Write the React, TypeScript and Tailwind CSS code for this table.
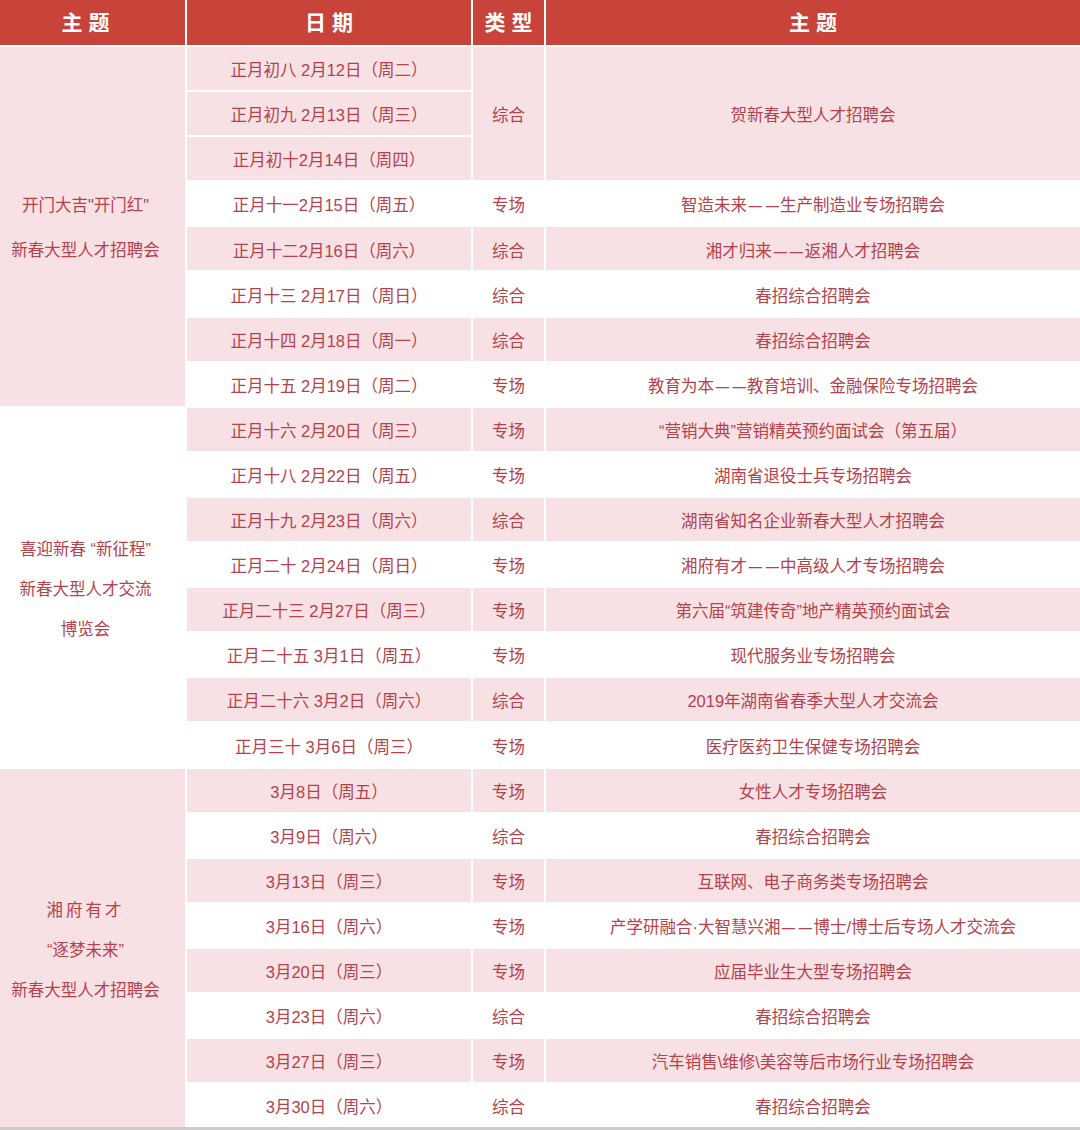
import React from "react";

type Row = { date: string; type?: string; theme?: React.ReactNode };

const D = () => (
  <span className="inline-flex">
    <span className="inline-block scale-x-[0.8]">—</span>
    <span className="inline-block scale-x-[0.8]">—</span>
  </span>
);

const rows: Row[] = [
  { date: "正月初八 2月12日（周二）" },
  { date: "正月初九 2月13日（周三）" },
  { date: "正月初十2月14日（周四）" },
  { date: "正月十一2月15日（周五）", type: "专场", theme: <>智造未来<D />生产制造业专场招聘会</> },
  { date: "正月十二2月16日（周六）", type: "综合", theme: <>湘才归来<D />返湘人才招聘会</> },
  { date: "正月十三 2月17日（周日）", type: "综合", theme: "春招综合招聘会" },
  { date: "正月十四 2月18日（周一）", type: "综合", theme: "春招综合招聘会" },
  { date: "正月十五 2月19日（周二）", type: "专场", theme: <>教育为本<D />教育培训、金融保险专场招聘会</> },
  { date: "正月十六 2月20日（周三）", type: "专场", theme: "“营销大典”营销精英预约面试会（第五届）" },
  { date: "正月十八 2月22日（周五）", type: "专场", theme: "湖南省退役士兵专场招聘会" },
  { date: "正月十九 2月23日（周六）", type: "综合", theme: "湖南省知名企业新春大型人才招聘会" },
  { date: "正月二十 2月24日（周日）", type: "专场", theme: <>湘府有才<D />中高级人才专场招聘会</> },
  { date: "正月二十三 2月27日（周三）", type: "专场", theme: "第六届“筑建传奇”地产精英预约面试会" },
  { date: "正月二十五 3月1日（周五）", type: "专场", theme: "现代服务业专场招聘会" },
  { date: "正月二十六 3月2日（周六）", type: "综合", theme: "2019年湖南省春季大型人才交流会" },
  { date: "正月三十 3月6日（周三）", type: "专场", theme: "医疗医药卫生保健专场招聘会" },
  { date: "3月8日（周五）", type: "专场", theme: "女性人才专场招聘会" },
  { date: "3月9日（周六）", type: "综合", theme: "春招综合招聘会" },
  { date: "3月13日（周三）", type: "专场", theme: "互联网、电子商务类专场招聘会" },
  { date: "3月16日（周六）", type: "专场", theme: <>产学研融合·大智慧兴湘<D />博士/博士后专场人才交流会</> },
  { date: "3月20日（周三）", type: "专场", theme: "应届毕业生大型专场招聘会" },
  { date: "3月23日（周六）", type: "综合", theme: "春招综合招聘会" },
  { date: "3月27日（周三）", type: "专场", theme: "汽车销售\\维修\\美容等后市场行业专场招聘会" },
  { date: "3月30日（周六）", type: "综合", theme: "春招综合招聘会" },
];

const font = { fontFamily: '"Liberation Sans", "Noto Sans CJK SC", sans-serif' };

function isPink(i: number) {
  return i < 3 || i % 2 === 0;
}

export default function App() {
  return (
    <div className="w-[1080px] h-[1130px] bg-white overflow-hidden" style={font}>
      <div className="grid grid-cols-[185px_284px_71px_534px] grid-rows-[45px_repeat(24,43.1px)] gap-[2px] bg-white text-[#b5424c] text-[16.5px]">
        {/* header */}
        <div className="bg-[#c8433a] text-white font-bold text-[21px] flex items-center justify-center pr-[14px]">主 题</div>
        <div className="bg-[#c8433a] text-white font-bold text-[21px] flex items-center justify-center">日 期</div>
        <div className="bg-[#c8433a] text-white font-bold text-[21px] flex items-center justify-center">类 型</div>
        <div className="bg-[#c8433a] text-white font-bold text-[21px] flex items-center justify-center">主 题</div>

        {/* left merged groups */}
        <div className="col-start-1 row-start-2 row-span-8 bg-[#f7e1e4] flex flex-col items-center justify-center leading-[45px] pr-[14px] pt-[4px]">
          <span>开门大吉"开门红"</span>
          <span>新春大型人才招聘会</span>
        </div>
        <div className="col-start-1 row-start-10 row-span-8 bg-white flex flex-col items-center justify-center leading-[40px] pr-[14px] pt-[4px]">
          <span>喜迎新春 “新征程”</span>
          <span>新春大型人才交流</span>
          <span>博览会</span>
        </div>
        <div className="col-start-1 row-start-18 row-span-8 bg-[#f7e1e4] flex flex-col items-center justify-center leading-[40px] pr-[14px] pt-[4px]">
          <span className="tracking-[3px]">湘府有才</span>
          <span>“逐梦未来”</span>
          <span>新春大型人才招聘会</span>
        </div>

        {/* merged type/theme for first three rows */}
        <div className="col-start-3 row-start-2 row-span-3 bg-[#f7e1e4] flex items-center justify-center pt-[4px]">综合</div>
        <div className="col-start-4 row-start-2 row-span-3 bg-[#f7e1e4] flex items-center justify-center pt-[4px]">贺新春大型人才招聘会</div>

        {rows.map((r, i) => {
          const bg = isPink(i) ? "bg-[#f7e1e4]" : "bg-white";
          return (
            <React.Fragment key={i}>
              <div className={`col-start-2 ${bg} flex items-center justify-center whitespace-nowrap pt-[4px]`} style={{ gridRowStart: i + 2 }}>
                {r.date}
              </div>
              {r.type && (
                <div className={`col-start-3 ${bg} flex items-center justify-center pt-[4px]`} style={{ gridRowStart: i + 2 }}>
                  {r.type}
                </div>
              )}
              {r.theme && (
                <div className={`col-start-4 ${bg} flex items-center justify-center whitespace-nowrap pt-[4px]`} style={{ gridRowStart: i + 2 }}>
                  <span>{r.theme}</span>
                </div>
              )}
            </React.Fragment>
          );
        })}
      </div>
      <div className="h-[3px] bg-[#cccccc]"></div>
    </div>
  );
}
